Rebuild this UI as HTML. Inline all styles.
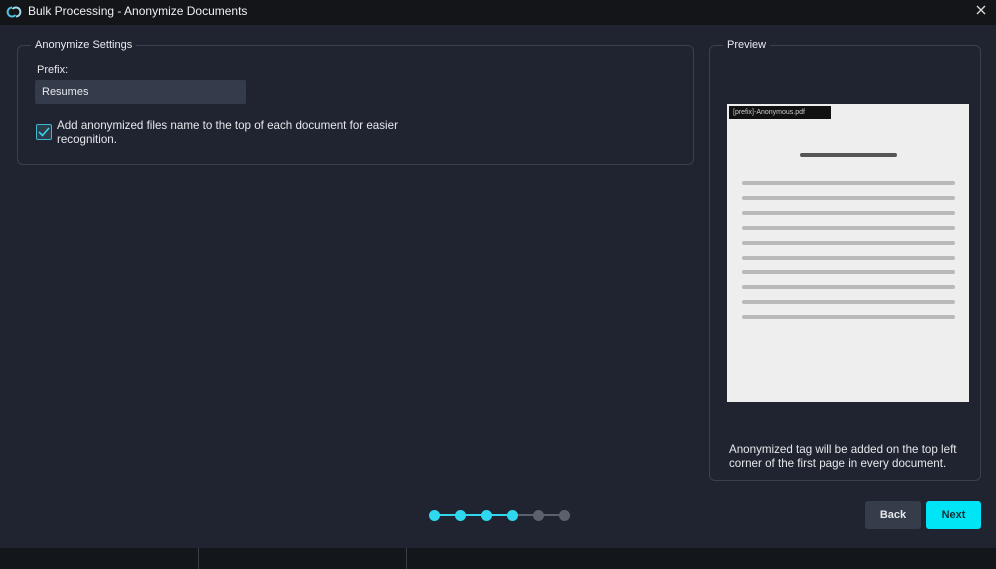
<!DOCTYPE html>
<html><head><meta charset="utf-8"><style>
*{margin:0;padding:0;box-sizing:border-box}
body{width:996px;height:569px;background:#1f2430;font-family:"Liberation Sans",sans-serif;color:#e6e8ec;position:relative;overflow:hidden}
.abs{position:absolute}
.title{left:0;top:0;width:996px;height:25px;background:#131519}
.fs{border:1px solid #3a404c;border-radius:6px}
.legend{background:#1f2430;padding:0 4px;font-size:11px;color:#e8eaee}
.line{height:4px;background:#b9b9b9;border-radius:2px;left:742px;width:213px}
.dot{width:11px;height:11px;border-radius:50%;top:510px}
</style></head><body>
<div class="abs title"></div>
<svg class="abs" style="left:6px;top:4px" width="16" height="16" viewBox="0 0 16 16"><path d="M6 3.5A4.5 4.5 0 1 0 9.5 11" stroke="#4fc3e0" stroke-width="2" fill="none"/><path d="M10 12.5A4.5 4.5 0 1 0 6.5 5" stroke="#9fd9ea" stroke-width="2" fill="none"/></svg>
<div class="abs" style="left:28px;top:4px;font-size:12px;color:#eef0f3">Bulk Processing - Anonymize Documents</div>
<svg class="abs" style="left:976px;top:5px" width="10" height="10"><path d="M1 1L9 9M9 1L1 9" stroke="#ddd" stroke-width="1.3"/></svg>

<div class="abs fs" style="left:17px;top:45px;width:677px;height:120px"></div>
<div class="abs legend" style="left:31px;top:39px">Anonymize Settings</div>
<div class="abs" style="left:37px;top:64px;font-size:11px">Prefix:</div>
<div class="abs" style="left:35px;top:80px;width:211px;height:24px;background:#343c4b;border-radius:2px;font-size:11px;padding:6px 7px">Resumes</div>
<div class="abs" style="left:36px;top:124px;width:16px;height:16px;border:1px solid #3fb8cf;background:#2a3d4a;border-radius:2px"></div>
<svg class="abs" style="left:38px;top:126px" width="12" height="12"><path d="M1 6l3.5 3.5L11 2" stroke="#3fd0ea" stroke-width="1.6" fill="none"/></svg>
<div class="abs" style="left:57px;top:119px;font-size:11.6px;line-height:14px;width:400px">Add anonymized files name to the top of each document for easier<br>recognition.</div>

<div class="abs fs" style="left:709px;top:45px;width:272px;height:436px"></div>
<div class="abs legend" style="left:723px;top:39px">Preview</div>
<div class="abs" style="left:727px;top:104px;width:242px;height:298px;background:#eeeeee"></div>
<div class="abs" style="left:729px;top:106px;width:102px;height:13px;background:#111;color:#ccc;font-size:7px;padding:3px 4px">[prefix]-Anonymous.pdf</div>
<div class="abs" style="left:800px;top:153px;width:97px;height:4px;background:#555;border-radius:2px"></div>
<div class="abs line" style="top:181px"></div><div class="abs line" style="top:196px"></div><div class="abs line" style="top:211px"></div><div class="abs line" style="top:226px"></div><div class="abs line" style="top:241px"></div><div class="abs line" style="top:256px"></div><div class="abs line" style="top:270px"></div><div class="abs line" style="top:285px"></div><div class="abs line" style="top:300px"></div><div class="abs line" style="top:315px"></div>
<div class="abs" style="left:729px;top:443px;font-size:11.6px;line-height:13.5px;width:260px">Anonymized tag will be added on the top left<br>corner of the first page in every document.</div>

<div class="abs" style="left:434px;top:514px;width:78px;height:2px;background:#2ed9ef"></div>
<div class="abs" style="left:512px;top:514px;width:52px;height:2px;background:#5c606b"></div>
<div class="abs dot" style="left:429px;background:#2ed9ef"></div>
<div class="abs dot" style="left:455px;background:#2ed9ef"></div>
<div class="abs dot" style="left:481px;background:#2ed9ef"></div>
<div class="abs dot" style="left:507px;background:#2ed9ef"></div>
<div class="abs dot" style="left:533px;background:#5c606b"></div>
<div class="abs dot" style="left:559px;background:#5c606b"></div>

<div class="abs" style="left:865px;top:501px;width:56px;height:28px;background:#363d4a;border-radius:3px;font-size:11px;text-align:center;line-height:28px;font-weight:bold;color:#e6e8ec">Back</div>
<div class="abs" style="left:926px;top:501px;width:55px;height:28px;background:#00e5f5;border-radius:3px;font-size:11px;text-align:center;line-height:28px;font-weight:bold;color:#12323a">Next</div>

<div class="abs" style="left:0;top:548px;width:996px;height:21px;background:#13161b"></div>
<div class="abs" style="left:198px;top:548px;width:1px;height:21px;background:#3a3f48"></div>
<div class="abs" style="left:406px;top:548px;width:1px;height:21px;background:#3a3f48"></div>
</body></html>
